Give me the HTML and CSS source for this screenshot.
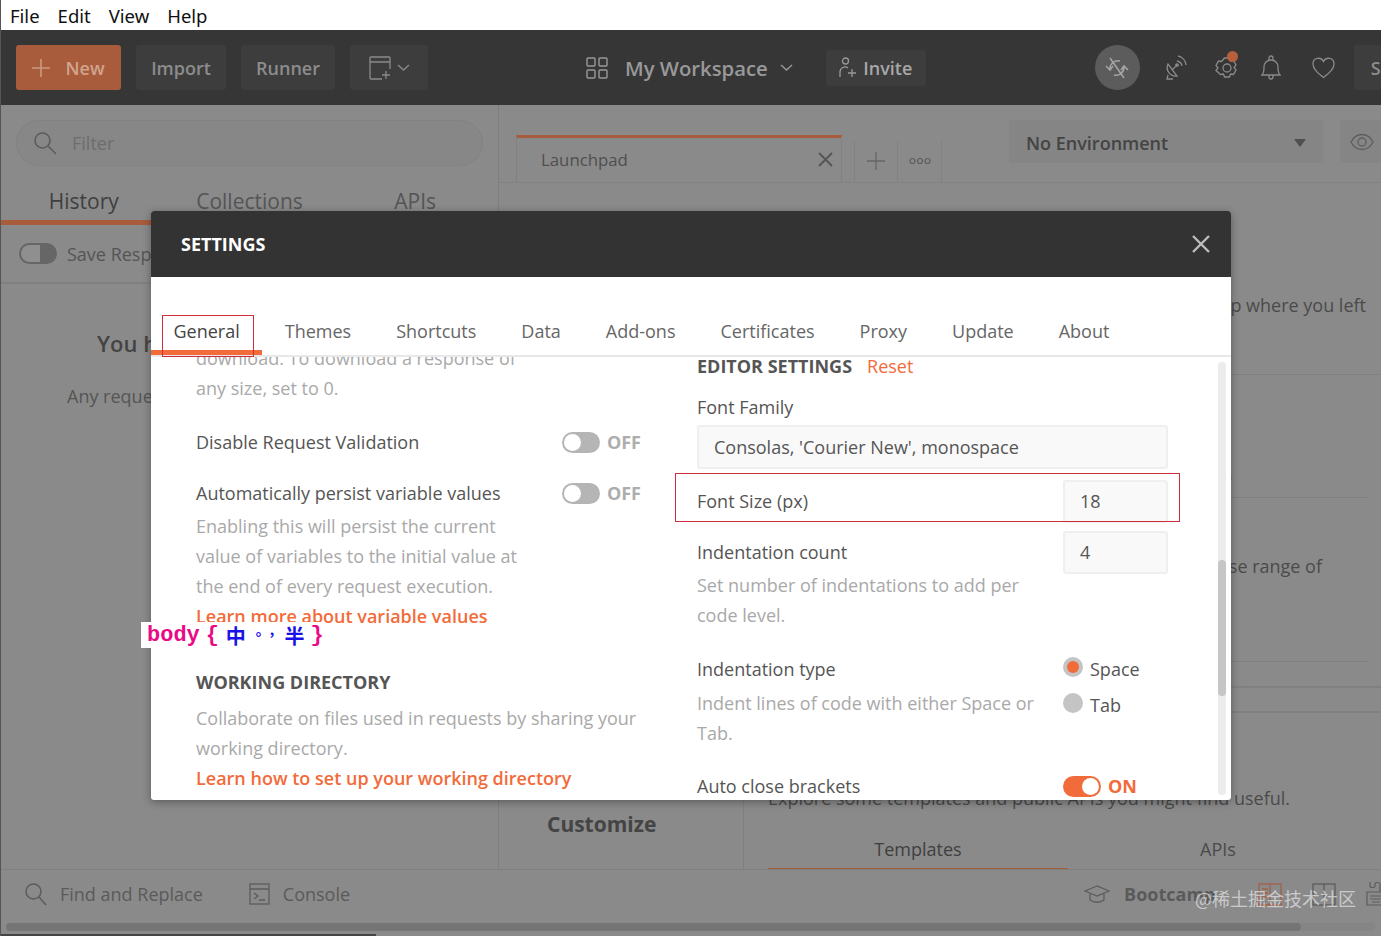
FILE: index.html
```html
<!DOCTYPE html>
<html lang="en">
<head>
  <meta charset="UTF-8">
  <title>Postman Settings</title>
  <link rel="stylesheet" href="styles.css">
</head>
<body>

<div class="app">
  <div class="menubar">
    <span>File</span><span>Edit</span><span>View</span><span>Help</span>
  </div>

  <div class="topbar">
    <div class="btn btn-new">
      <svg width="18" height="18" viewBox="0 0 18 18" fill="none" stroke="#c9997f" stroke-width="1.6"><path d="M9 0v18M0 9h18"/></svg>
      <span>New</span>
    </div>
    <div class="btn btn-import">Import</div>
    <div class="btn btn-runner">Runner</div>
    <div class="btn btn-capture">
      <svg width="23" height="26" viewBox="0 0 23 26" fill="none" stroke="#8a8a8a" stroke-width="1.3"><path d="M21 14V3a1 1 0 0 0-1-1H2a1 1 0 0 0-1 1v20a1 1 0 0 0 1 1h11M1 7h20M17 16v8M13 20h8"/></svg>
      <svg width="13" height="7" viewBox="0 0 13 7" fill="none" stroke="#8a8a8a" stroke-width="1.3"><path d="M1 1l5.500 5 5.500-5"/></svg>
    </div>
    <div class="workspace">
      <svg width="22" height="22" viewBox="0 0 22 22" fill="none" stroke="#999" stroke-width="1.4"><rect x="1" y="1" width="8" height="8" rx="1"/><rect x="13" y="1" width="8" height="8" rx="1"/><rect x="1" y="13" width="8" height="8" rx="1"/><rect x="13" y="13" width="8" height="8" rx="1"/></svg>
      <span class="workspace-name">My Workspace</span>
      <svg width="13" height="7" viewBox="0 0 13 7" fill="none" stroke="#999" stroke-width="1.4"><path d="M1 1l5.500 5 5.500-5"/></svg>
    </div>
    <div class="btn btn-invite">
      <svg width="17" height="21" viewBox="0 0 17 21" fill="none" stroke="#999" stroke-width="1.3"><circle cx="6.500" cy="4" r="3"/><path d="M1 20v-5a5 5 0 0 1 8-4M13 12v8M9 16h8"/></svg>
      <span>Invite</span>
    </div>
    <div class="sync">
      <svg width="26" height="26" viewBox="0 0 26 26" fill="none" stroke="#a5a5a5" stroke-width="1.5"><path d="M6 3l14 20M6 14a8 8 0 0 1 10-8M20 12a8 8 0 0 1-10 8M2 11l4 4 3-4M24 15l-4-4-3 4"/></svg>
    </div>
    <svg class="icon-sat" width="24" height="26" viewBox="0 0 24 26" fill="none" stroke="#8a8a8a" stroke-width="1.3"><path d="M5 9a8.500 8.500 0 0 0 9 12zM9 15l5-5M14 6a6 6 0 0 1 5 5M15 1a10 10 0 0 1 8 9M5 20l-1 4h6"/><circle cx="14" cy="10" r="1.200" fill="#8a8a8a"/></svg>
    <div class="gear">
      <svg width="24" height="26" viewBox="0 0 24 26" fill="none" stroke="#8a8a8a" stroke-width="1.3"><path d="M9.500 2h5l1 3 3-.500 2.500 4.500-2 2.500 2 2.500-2.500 4.500-3-.500-1 3h-5l-1-3-3 .500L1 14.500 3 12 1 9.500 3.500 5l3 .500z" transform="translate(0 1)"/><circle cx="12" cy="13" r="4"/></svg>
      <span class="gear-dot"></span>
    </div>
    <svg class="icon-bell" width="20" height="26" viewBox="0 0 20 26" fill="none" stroke="#8a8a8a" stroke-width="1.3"><path d="M1 20c2-2 2-4 2-8 0-4 3-7 7-7s7 3 7 7c0 4 0 6 2 8zM8 5V3a2 2 0 0 1 4 0v2M8 20v2a2 2 0 0 0 4 0v-2"/></svg>
    <svg class="icon-heart" width="23" height="22" viewBox="0 0 23 22" fill="none" stroke="#8a8a8a" stroke-width="1.3"><path d="M11.500 20.500C6 16 1 12 1 7a5.500 5.500 0 0 1 10.500-2.500A5.500 5.500 0 0 1 22 7c0 5-5 9-10.500 13.500z"/></svg>
    <div class="btn btn-sign">Sign In</div>
  </div>

  <div class="main">
    <div class="sidebar">
      <div class="filter">
        <svg width="24" height="24" viewBox="0 0 24 24" fill="none" stroke="#5c5c5c" stroke-width="1.6"><circle cx="9.500" cy="9.500" r="7.500"/><path d="M15 15l8 8"/></svg>
        <span>Filter</span>
      </div>
      <div class="side-tabs">
        <div class="side-tab active">History</div>
        <div class="side-tab">Collections</div>
        <div class="side-tab">APIs</div>
      </div>
      <div class="save-row">
        <span class="switch-dim"></span>
        <span>Save Responses</span>
      </div>
      <h3 class="empty-title">You haven't sent any requests.</h3>
      <p class="empty-text">Any request you send in this workspace will appear here.</p>
    </div>

    <div class="content">
      <div class="tabstrip">
        <div class="tab">
          <span>Launchpad</span>
          <svg width="15" height="15" viewBox="0 0 15 15" fill="none" stroke="#555" stroke-width="1.8"><path d="M1 1l13 13M14 1L1 14"/></svg>
        </div>
        <div class="tab-btn tab-add">
          <svg width="18" height="18" viewBox="0 0 18 18" fill="none" stroke="#666" stroke-width="1.300"><path d="M9 0v18M0 9h18"/></svg>
        </div>
        <div class="tab-btn">
          <svg width="22" height="8" viewBox="0 0 22 8" fill="none" stroke="#5e5e5e" stroke-width="1.200"><circle cx="3.500" cy="4" r="2.500"/><circle cx="11" cy="4" r="2.500"/><circle cx="18.500" cy="4" r="2.500"/></svg>
        </div>
        <div class="env">
          <span>No Environment</span>
          <i class="caret"></i>
        </div>
        <div class="eye">
          <svg width="24" height="18" viewBox="0 0 24 18" fill="none" stroke="#5e5e5e" stroke-width="1.300"><path d="M1 9c5-10 17-10 22 0-5 10-17 10-22 0z"/><circle cx="12" cy="9" r="4"/></svg>
        </div>
      </div>

      <div class="launch">
        <div class="launch-left"><b class="customize">Customize</b></div>
        <div class="launch-right">
          <div class="row row-pick"><span>Pick up where you left</span></div>
          <div class="row row-coll"><span>Your collections and requests</span></div>
          <div class="row row-range"><span>Use a diverse range of</span></div>
          <div class="row row-thin"></div>
          <div class="row row-thin row-full"></div>
          <div class="explore">
            <p>Explore some templates and public APIs you might find useful.</p>
            <div class="explore-tabs">
              <div class="explore-tab active">Templates</div>
              <div class="explore-tab">APIs</div>
            </div>
          </div>
        </div>
      </div>
    </div>
  </div>

  <div class="footer">
    <svg class="foot-search" width="22" height="23" viewBox="0 0 22 23" fill="none" stroke="#5c5c5c" stroke-width="1.500"><circle cx="8.500" cy="8.500" r="7.500"/><path d="M14 14l7 8"/></svg>
    <span>Find and Replace</span>
    <svg class="foot-console" width="21" height="22" viewBox="0 0 21 22" fill="none" stroke="#5c5c5c" stroke-width="1.300"><rect x="1" y="1" width="19" height="20"/><path d="M1 6h19M5 10l4 3-4 3M10 17h6"/></svg>
    <span>Console</span>
    <svg class="foot-cap" width="26" height="20" viewBox="0 0 26 20" fill="none" stroke="#5c5c5c" stroke-width="1.300"><path d="M13 2L1 7l12 5 12-5zM6 10v6c4 3 10 3 14 0v-6"/></svg>
    <b>Bootcamp</b>
    <svg class="foot-book" width="24" height="23" viewBox="0 0 24 23" fill="none" stroke="#a0604a" stroke-width="1.300"><rect x="1" y="1" width="22" height="21"/><path d="M12 1v21M4 6h6M4 10h6M4 14h6"/></svg>
    <svg class="foot-cols" width="24" height="23" viewBox="0 0 24 23" fill="none" stroke="#5c5c5c" stroke-width="1.300"><rect x="1" y="1" width="22" height="21"/><path d="M12 1v21"/></svg>
    <svg class="foot-keys" width="20" height="26" viewBox="0 0 20 26" fill="none" stroke="#5c5c5c" stroke-width="1.200"><path d="M1 11h18v13H1zM4 1v4c0 2 5 2 5 0V3c0-2 5-2 5 0v8M4 15h12M4 18h12M6 21h8"/></svg>
  </div>
  <div class="hscroll"><div class="hscroll-thumb"></div></div>
  <div class="edge"></div>
</div>

<div class="modal">
  <div class="modal-head">
    <h2>SETTINGS</h2>
    <svg width="20" height="20" viewBox="0 0 20 20" fill="none" stroke="#bdbdbd" stroke-width="2.400"><path d="M2 2l16 16M18 2L2 18"/></svg>
  </div>
  <div class="modal-tabs">
    <div class="mtab active">General</div>
    <div class="mtab">Themes</div>
    <div class="mtab">Shortcuts</div>
    <div class="mtab">Data</div>
    <div class="mtab">Add-ons</div>
    <div class="mtab">Certificates</div>
    <div class="mtab">Proxy</div>
    <div class="mtab">Update</div>
    <div class="mtab">About</div>
  </div>
  <div class="modal-body">
    <div class="col-left">
      <p class="desc narrow">download. To download a response of any size, set to 0.</p>
      <div class="setting s-validation">
        <span>Disable Request Validation</span>
        <div class="toggle"><i class="switch"></i><b>OFF</b></div>
      </div>
      <div class="setting s-persist">
        <span>Automatically persist variable values</span>
        <div class="toggle"><i class="switch"></i><b>OFF</b></div>
      </div>
      <p class="desc narrow">Enabling this will persist the current value of variables to the initial value at the end of every request execution.</p>
      <a class="link">Learn more about variable values</a>
      <h4 class="section s-working">WORKING DIRECTORY</h4>
      <p class="desc">Collaborate on files used in requests by sharing your working directory.</p>
      <a class="link">Learn how to set up your working directory</a>
    </div>
    <div class="col-right">
      <div class="section-head"><h4 class="section">EDITOR SETTINGS</h4><a class="reset">Reset</a></div>
      <div class="label l-family">Font Family</div>
      <div class="field field-wide">Consolas, 'Courier New', monospace</div>
      <div class="line l-size">
        <span>Font Size (px)</span>
        <div class="field">18</div>
      </div>
      <div class="line l-indent">
        <div class="line-text">
          <span>Indentation count</span>
          <p class="desc">Set number of indentations to add per code level.</p>
        </div>
        <div class="field">4</div>
      </div>
      <div class="line l-type">
        <div class="line-text">
          <span>Indentation type</span>
          <p class="desc">Indent lines of code with either Space or Tab.</p>
        </div>
        <div class="radios">
          <div class="radio-row"><i class="radio on"></i><span>Space</span></div>
          <div class="radio-row"><i class="radio"></i><span>Tab</span></div>
        </div>
      </div>
      <div class="line l-brackets">
        <span>Auto close brackets</span>
        <div class="toggle toggle-on"><i class="switch"></i><b>ON</b></div>
      </div>
    </div>
    <div class="scroll"><div class="scroll-thumb"></div></div>
  </div>
</div>

<div class="mark mark-general"></div>
<div class="mark mark-size"></div>
<div class="snippet">
  <span class="sn-body">body</span><span class="sn-brace">{</span><span class="sn-cjk">中</span><span class="sn-punc">。,</span><span class="sn-cjk">半</span><span class="sn-brace">}</span>
</div>
<div class="watermark">@稀土掘金技术社区</div>

</body>
</html>
```

FILE: styles.css
```css
* {
  box-sizing: border-box;
}
body {
  margin: 0;
  width: 1381px;
  height: 936px;
  overflow: hidden;
  position: relative;
  font-family: "Open Sans", sans-serif;
  font-size: 18px;
  color: #555;
  background-color: #8a8a8a;
}
p, h2, h3, h4 {
  margin: 0;
}
.app {
  display: flex;
  flex-direction: column;
  height: 936px;
  border-left: 1px solid #555;
}

/* menu */
.menubar {
  display: flex;
  align-items: center;
  gap: 18px;
  height: 30px;
  padding-left: 9px;
  background-color: #fff;
  color: #111;
  font-family: "Noto Sans", sans-serif;
  font-size: 18.500px;
}

/* top bar */
.topbar {
  display: flex;
  align-items: center;
  height: 75px;
  padding-left: 15px;
  background-color: #363636;
  color: #8c8c8c;
  overflow: hidden;
  flex-shrink: 0;
}
.btn {
  display: flex;
  align-items: center;
  justify-content: center;
  height: 45px;
  border-radius: 3px;
  background-color: #3d3d3d;
  font-weight: 600;
  font-size: 18px;
  flex-shrink: 0;
}
.btn-new {
  width: 105px;
  gap: 15px;
  background-color: #a85c3c;
  color: #cfa48e;
}
.btn-import {
  width: 90px;
  margin-left: 15px;
}
.btn-runner {
  width: 94px;
  margin-left: 15px;
}
.btn-capture {
  width: 78px;
  margin-left: 15px;
  gap: 5px;
}
.workspace {
  display: flex;
  align-items: center;
  margin-left: 158px;
  color: #999;
  font-weight: 600;
  font-size: 20.300px;
  flex-shrink: 0;
}
.workspace-name {
  margin: 0 12px 0 17px;
}
.btn-invite {
  width: 100px;
  height: 36px;
  margin-left: 33px;
  gap: 7px;
  color: #a8a8a8;
  font-size: 18px;
}
.sync {
  display: flex;
  align-items: center;
  justify-content: center;
  width: 45px;
  height: 45px;
  margin-left: 169px;
  border-radius: 50%;
  background-color: #5c5c5c;
  flex-shrink: 0;
}
.icon-sat {
  margin-left: 23px;
  flex-shrink: 0;
}
.gear {
  position: relative;
  margin-left: 28px;
  height: 26px;
  flex-shrink: 0;
}
.gear-dot {
  position: absolute;
  top: -4px;
  right: 1px;
  width: 11px;
  height: 11px;
  border-radius: 50%;
  background-color: #b85f3d;
}
.icon-bell {
  margin-left: 22px;
  flex-shrink: 0;
}
.icon-heart {
  margin-left: 31px;
  flex-shrink: 0;
}
.btn-sign {
  width: 90px;
  margin-left: 19px;
  justify-content: flex-start;
  padding-left: 17px;
}

/* main */
.main {
  display: flex;
  height: 764px;
  flex-shrink: 0;
}
.sidebar {
  width: 498px;
  border-right: 1px solid #7f7f7f;
  overflow: hidden;
  flex-shrink: 0;
}
.filter {
  display: flex;
  align-items: center;
  gap: 15px;
  height: 46px;
  margin: 15px 15px 0;
  padding-left: 16px;
  border: 1px solid #828282;
  border-radius: 23px;
  background-color: #878787;
  color: #6d6d6d;
}
.side-tabs {
  display: flex;
  height: 45px;
  margin-top: 14px;
  border-bottom: 1px solid #808080;
}
.side-tab {
  width: 165.700px;
  height: 45px;
  padding-top: 6px;
  text-align: center;
  font-size: 21px;
  line-height: 30px;
}
.side-tab.active {
  border-bottom: 5px solid #a85c3c;
  color: #3f3f3f;
}
.save-row {
  display: flex;
  align-items: center;
  gap: 10px;
  height: 59px;
  padding-left: 18px;
  border-bottom: 2px solid #808080;
}
.switch-dim {
  width: 38px;
  height: 21px;
  border-radius: 11px;
  background: linear-gradient(to right, #8f8f8f 55%, #666 55%);
  border: 2px solid #666;
}
.empty-title {
  margin: 44px 0 0 96px;
  font-size: 22px;
  font-weight: 600;
  color: #444;
  line-height: 30px;
  white-space: nowrap;
}
.empty-text {
  margin: 23px 0 0 66px;
  line-height: 30px;
  white-space: nowrap;
}

.content {
  flex: 1;
  min-width: 0;
  overflow: hidden;
}
.tabstrip {
  display: flex;
  align-items: flex-start;
  height: 78px;
  padding-left: 17px;
  border-bottom: 1px solid #818181;
}
.tabstrip > div {
  flex-shrink: 0;
}
.tab {
  display: flex;
  align-items: center;
  justify-content: space-between;
  width: 326px;
  height: 47px;
  margin-top: 30px;
  padding: 0 8px 2px 24px;
  border-top: 3px solid #a85c3c;
  border-left: 1px solid #818181;
  border-right: 1px solid #818181;
  color: #4f4f4f;
  font-size: 16.800px;
}
.tab-btn {
  display: flex;
  align-items: center;
  justify-content: center;
  width: 44px;
  height: 42px;
  margin-top: 35px;
  border-right: 1px solid #828282;
}
.tab-add {
  margin-left: 12px;
  border-left: 1px solid #828282;
}
.env {
  display: flex;
  align-items: center;
  justify-content: space-between;
  width: 314px;
  height: 43px;
  margin: 15px 0 0 67px;
  padding: 2px 17px 0;
  background-color: #858585;
  color: #444;
  font-weight: 600;
}
.caret {
  border-left: 6px solid transparent;
  border-right: 6px solid transparent;
  border-top: 8px solid #4f4f4f;
}
.eye {
  display: flex;
  align-items: center;
  justify-content: center;
  width: 60px;
  height: 43px;
  margin: 15px 0 0 17px;
  padding-right: 16px;
  background-color: #858585;
}
.launch {
  display: flex;
  height: 686px;
}
.launch-left {
  display: flex;
  align-items: flex-end;
  width: 245px;
  flex-shrink: 0;
}
.customize {
  width: 100%;
  height: 150px;
  padding: 90px 0 0 48px;
  border-right: 1px solid #7f7f7f;
  color: #444;
  font-size: 21px;
  line-height: 30px;
}
.launch-right {
  flex: 1;
  min-width: 0;
  color: #4a4a4a;
}
.row {
  display: flex;
  justify-content: flex-end;
  line-height: 30px;
  white-space: nowrap;
  border-bottom: 1px solid #808080;
}
.row-pick {
  height: 192px;
  padding: 107px 15px 0 0;
}
.row-coll {
  height: 123px;
  padding: 84px 136px 0 0;
  margin-right: 13px;
}
.row-range {
  height: 164px;
  padding: 53px 46px 0 0;
  margin-right: 13px;
}
.row-thin {
  height: 26px;
  border-bottom-width: 2px;
}
.row-full {
  height: 25px;
}
.explore {
  height: 156px;
  padding: 70px 0 0 24px;
}
.explore p {
  line-height: 30px;
  white-space: nowrap;
}
.explore-tabs {
  display: flex;
  margin-top: 21px;
}
.explore-tab {
  width: 300px;
  height: 35px;
  padding-top: 3px;
  text-align: center;
  line-height: 24px;
}
.explore-tab.active {
  border-bottom: 1px solid #a85c3c;
  color: #3f3f3f;
}
.footer {
  display: flex;
  align-items: center;
  height: 54px;
  padding: 0 0 5px 24px;
  border-top: 1px solid #808080;
  color: #5a5a5a;
  flex-shrink: 0;
  white-space: nowrap;
  overflow: hidden;
}
.footer svg {
  flex-shrink: 0;
}
.foot-search {
  margin-right: 13px;
}
.foot-console {
  margin: 0 13px 0 46px;
}
.foot-cap {
  margin: 0 14px 0 734px;
}
.foot-book {
  margin-left: 43px;
}
.foot-cols {
  margin-left: 30px;
}
.foot-keys {
  margin-left: 30px;
}
.hscroll {
  height: 8px;
  margin: 0 6px 0 5px;
  border-radius: 4px;
  background-color: #858585;
  flex-shrink: 0;
}
.hscroll-thumb {
  width: 1295px;
  height: 8px;
  border-radius: 4px;
  background-color: #757575;
}
.edge {
  width: 375px;
  height: 2px;
  margin-top: 3px;
  background-color: #444;
  flex-shrink: 0;
}

/* settings modal */
.modal {
  position: absolute;
  left: 151px;
  top: 211px;
  width: 1080px;
  height: 589px;
  border-radius: 3px;
  overflow: hidden;
  background-color: #fff;
  box-shadow: 0 2px 8px rgba(0, 0, 0, .35);
}
.modal-head {
  display: flex;
  align-items: center;
  justify-content: space-between;
  height: 66px;
  padding: 0 20px 0 30px;
  background-color: #333;
}
.modal-head h2 {
  color: #fff;
  font-size: 18px;
  font-weight: 700;
}
.modal-tabs {
  display: flex;
  height: 80px;
  border-bottom: 2px solid #e8e8e8;
  color: #666;
}
.mtab {
  height: 78px;
  padding: 40px 22.500px 0;
  line-height: 28px;
}
.mtab.active {
  border-bottom: 5px solid #f26b3a;
  color: #444;
}
.modal-body {
  display: flex;
  position: relative;
  height: 443px;
  overflow: hidden;
}
.col-left {
  width: 546px;
  height: 500px;
  margin-top: -14px;
  padding-left: 45px;
  flex-shrink: 0;
}
.desc {
  color: #a9a9a9;
  line-height: 30px;
}
.desc.narrow {
  width: 340px;
}
.setting {
  display: flex;
  align-items: center;
  justify-content: space-between;
  width: 445px;
  line-height: 30px;
  color: #555;
}
.s-validation {
  margin-top: 24px;
}
.s-persist {
  margin-top: 21px;
  margin-bottom: 3px;
}
.toggle {
  display: flex;
  align-items: center;
  gap: 7px;
}
.toggle b {
  color: #adadad;
}
.switch {
  display: block;
  position: relative;
  width: 38px;
  height: 21px;
  border-radius: 11px;
  background-color: #b5b5b5;
}
.switch:after {
  content: "";
  position: absolute;
  left: 2px;
  top: 2px;
  width: 17px;
  height: 17px;
  border-radius: 50%;
  background-color: #fff;
}
.toggle-on .switch {
  background-color: #f26b3a;
}
.toggle-on .switch:after {
  left: 19px;
}
.toggle-on b {
  color: #f26b3a;
}
.link {
  display: block;
  color: #f26b3a;
  font-weight: 600;
  line-height: 30px;
}
.section {
  color: #555;
  font-size: 18px;
  font-weight: 700;
  line-height: 30px;
}
.s-working {
  margin-top: 36px;
  margin-bottom: 6px;
}
.col-right {
  width: 471px;
  flex-shrink: 0;
}
.section-head {
  display: flex;
  gap: 15px;
  margin-top: -6px;
  height: 30px;
}
.reset {
  color: #f26b3a;
  line-height: 30px;
}
.label {
  line-height: 30px;
}
.l-family {
  margin-top: 11px;
}
.field {
  width: 105px;
  height: 43px;
  padding-left: 15px;
  border: 2px solid #efefef;
  border-radius: 3px;
  background-color: #f9f9f9;
  line-height: 39px;
}
.field-wide {
  width: 471px;
  height: 44px;
  margin-top: 3px;
  line-height: 40px;
}
.line {
  display: flex;
  justify-content: space-between;
  line-height: 30px;
}
.line-text {
  width: 345px;
}
.l-size {
  align-items: center;
  height: 43px;
  margin-top: 11px;
}
.l-size span {
  margin-bottom: 2px;
}
.l-indent {
  margin-top: 8px;
  height: 123px;
}
.l-indent .line-text {
  padding-top: 6px;
}
.l-indent .desc {
  margin-top: 3px;
}
.l-type {
  height: 117px;
}
.l-type .desc {
  margin-top: 4px;
}
.radios {
  width: 105px;
  margin-top: -3px;
}
.radio-row {
  display: flex;
  align-items: center;
  gap: 7px;
  height: 36px;
}
.radio {
  display: block;
  position: relative;
  width: 20px;
  height: 20px;
  margin-top: -4px;
  border-radius: 50%;
  background-color: #c4c4c4;
}
.radio.on:after {
  content: "";
  position: absolute;
  left: 4px;
  top: 4px;
  width: 12px;
  height: 12px;
  border-radius: 50%;
  background-color: #f26b3a;
}
.l-brackets {
  align-items: center;
}
.l-brackets .toggle {
  width: 105px;
}
.scroll {
  position: absolute;
  left: 1067px;
  top: 5px;
  width: 8px;
  height: 433px;
  border-radius: 4px;
  background-color: #ececec;
}
.scroll-thumb {
  width: 8px;
  height: 136px;
  margin-top: 198px;
  border-radius: 4px;
  background-color: #c6c6c6;
}

/* annotations drawn over the screenshot */
.mark {
  position: absolute;
  border: 1px solid #cf2e3a;
}
.mark-general {
  left: 162px;
  top: 315px;
  width: 92px;
  height: 42px;
}
.mark-size {
  left: 675px;
  top: 473px;
  width: 505px;
  height: 49px;
}
.snippet {
  position: absolute;
  left: 141px;
  top: 622px;
  width: 180px;
  height: 26px;
  padding-left: 6px;
  display: flex;
  align-items: center;
  background-color: #fff;
  font-family: "Liberation Mono", monospace;
  font-weight: 700;
  font-size: 22px;
  white-space: nowrap;
}
.sn-body, .sn-brace {
  color: #ea0a86;
}
.sn-brace {
  margin-left: 6px;
  width: 10px;
}
.sn-cjk, .sn-punc {
  color: #1a10e8;
  font-family: "Noto Sans CJK SC", sans-serif;
  font-size: 20px;
}
.sn-cjk {
  margin-left: 10px;
}
.sn-punc {
  display: inline-block;
  margin-left: 10px;
  font-size: 14px;
  transform: translateY(-6px);
}
.watermark {
  position: absolute;
  left: 1195px;
  top: 885px;
  color: rgba(232, 232, 232, .7);
  font-family: "Noto Sans CJK SC", sans-serif;
  font-size: 18px;
  line-height: 26px;
  white-space: nowrap;
}
```
